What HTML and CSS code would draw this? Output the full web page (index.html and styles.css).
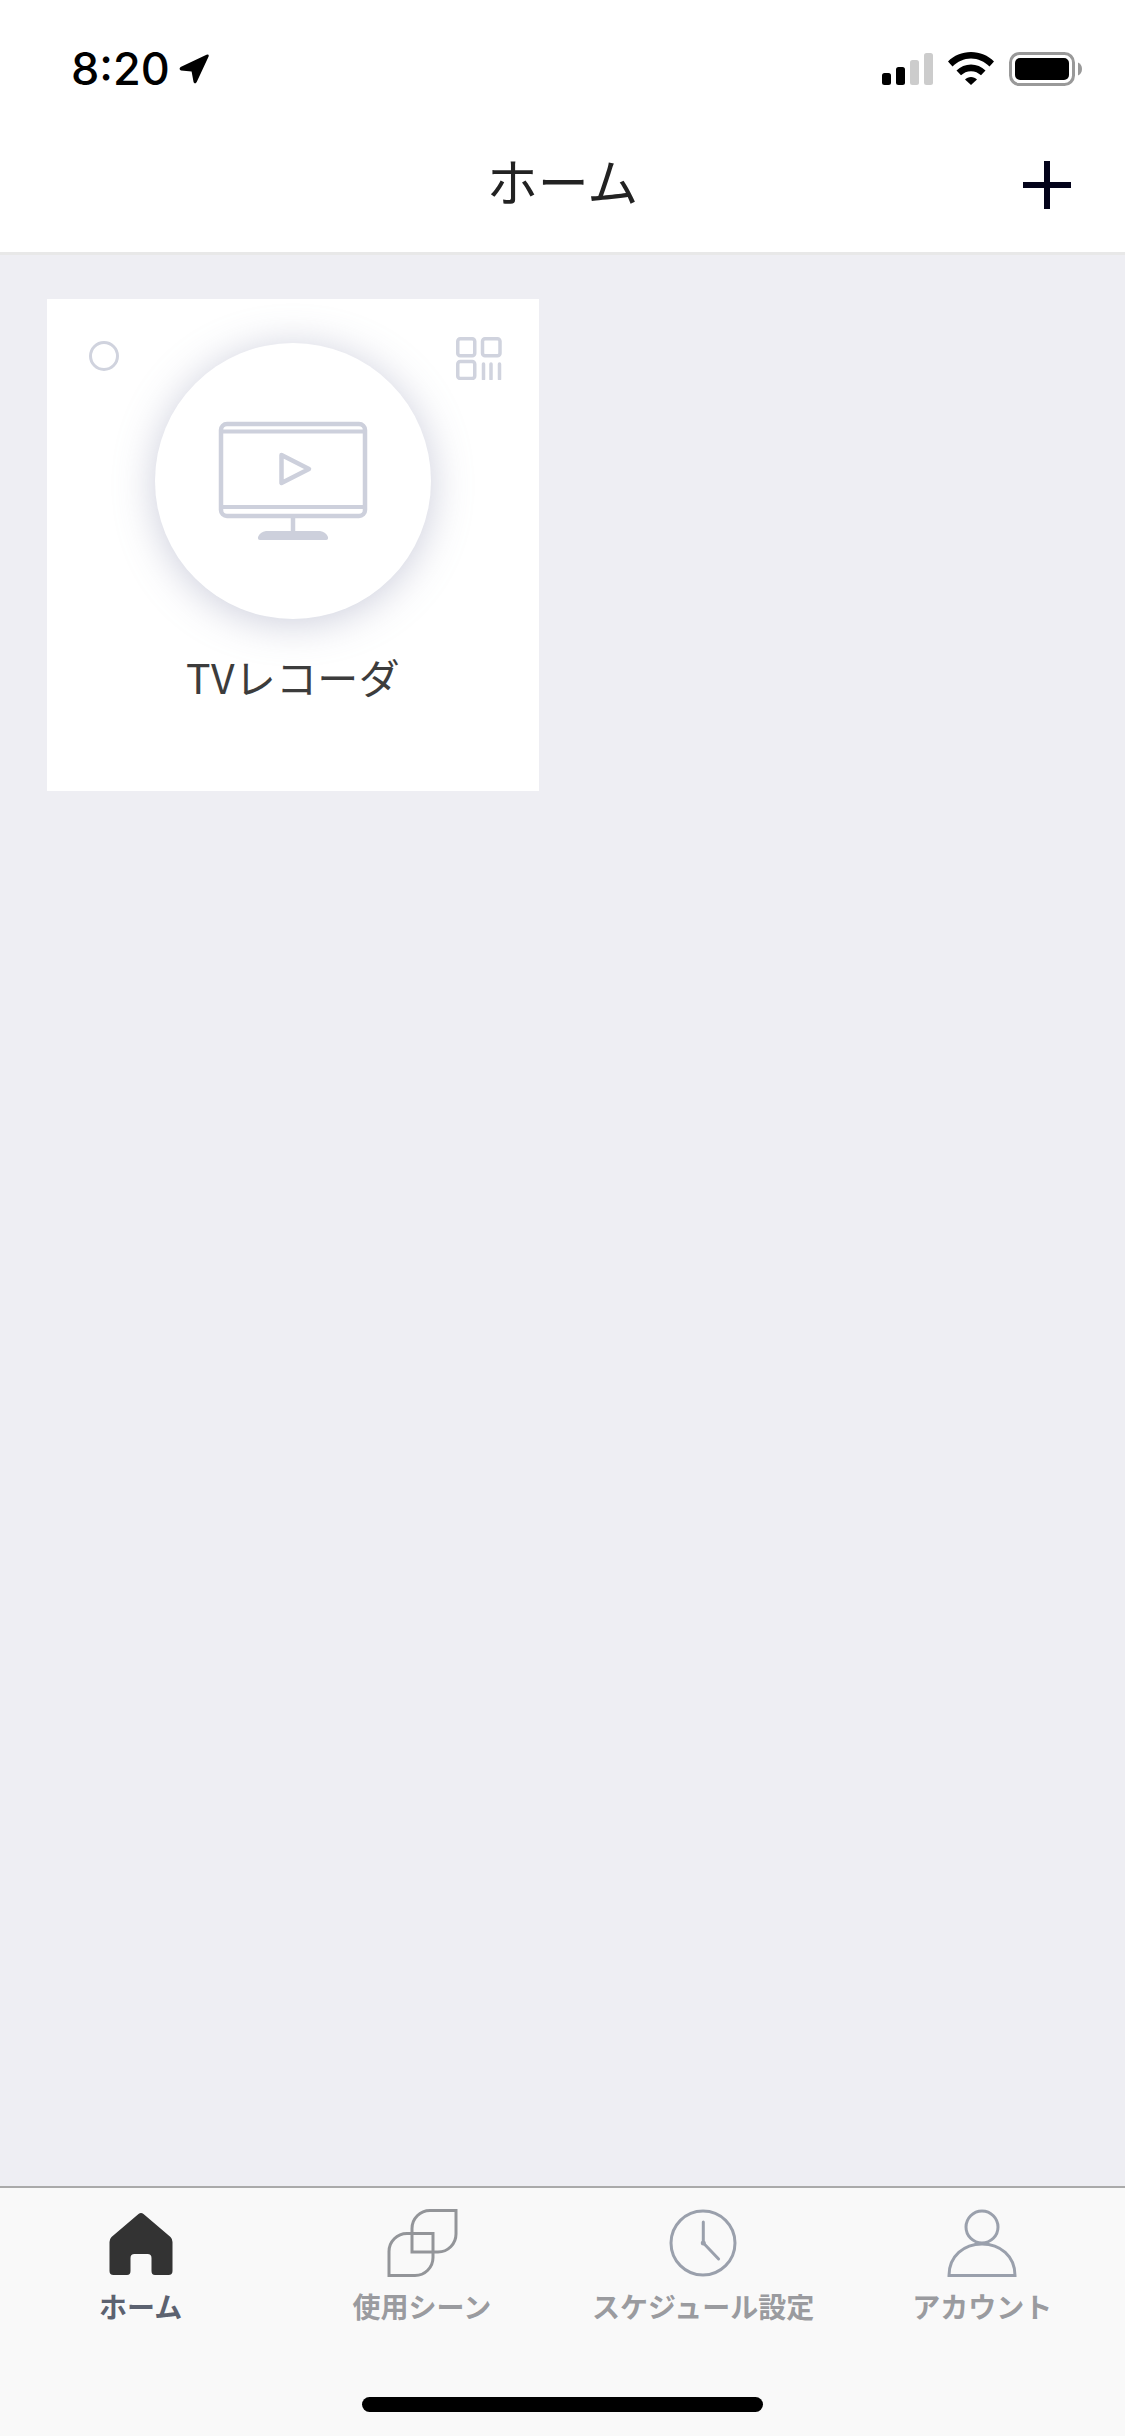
FILE: index.html
```html
<!DOCTYPE html>
<html lang="ja">
<head>
    <meta charset="UTF-8">
    <meta name="viewport" content="width=device-width, initial-scale=1.0">
    <title>ホーム</title>
    <link rel="stylesheet" href="styles.css">
</head>
<body>
<div class="app">
    <div class="status-bar">
        <div class="status-left">
            <span class="time">8:20</span>
            <svg class="location" width="30" height="30" viewBox="0 0 30 30">
                <path d="M27.5.7Q30.3-.2 29.6 2.5L17.6 28.3Q16 30.6 14.6 28.3L12.6 17.4 2 16.6Q-.6 15.2 1.6 13Z" fill="#000"/>
            </svg>
        </div>
        <div class="status-right">
            <svg class="signal" width="51" height="33" viewBox="0 0 51 33">
                <rect x="0" y="21" width="9" height="12" rx="2.5" fill="#000"/>
                <rect x="14" y="15" width="9" height="18" rx="2.5" fill="#000"/>
                <rect x="28" y="8" width="9" height="25" rx="2.5" fill="#ccc"/>
                <rect x="42" y="1" width="9" height="32" rx="2.5" fill="#ccc"/>
            </svg>
            <svg class="wifi" width="46" height="33" viewBox="0 0 46 33">
                <path d="M23 0C14 0 6 3.5 0 9.5L4.5 14.5C9.5 9.5 16 6.5 23 6.5C30 6.5 36.500 9.500 41.500 14.500L46 9.500C40 3.500 32 0 23 0Z" fill="#000"/>
                <path d="M23 12.500C17.500 12.500 12.500 14.700 8.500 18.500L13 23.300C15.700 20.800 19 19.200 23 19.200C27 19.200 30.300 20.800 33 23.300L37.500 18.500C33.500 14.700 28.500 12.500 23 12.500Z" fill="#000"/>
                <path d="M23 25C20.500 25 18.600 25.900 17 27.400L23 33L29 27.400C27.400 25.900 25.500 25 23 25Z" fill="#000"/>
            </svg>
            <svg class="battery" width="73" height="34" viewBox="0 0 73 34">
                <rect x="1.500" y="1.500" width="63" height="31" rx="9" fill="none" stroke="#999" stroke-width="3"/>
                <rect x="6" y="6" width="54" height="22" rx="5" fill="#000"/>
                <path d="M69 10.500C71.500 11.500 73 14 73 17C73 20 71.500 22.500 69 23.500Z" fill="#999"/>
            </svg>
        </div>
    </div>

    <header class="nav-bar">
        <h1 class="nav-title">ホーム</h1>
        <svg class="nav-add" width="48" height="48" viewBox="0 0 48 48">
            <path d="M24 0V48M0 24H48" stroke="#03031a" stroke-width="6" fill="none"/>
        </svg>
    </header>

    <main class="content">
        <div class="device-card">
            <span class="select-dot"></span>
            <svg class="qr-icon" width="46" height="43" viewBox="0 0 46 43">
                <g fill="none" stroke="#d0d3de" stroke-width="3.500">
                    <rect x="1.750" y="1.750" width="17" height="17" rx="2.500"/>
                    <rect x="26.500" y="1.750" width="17.500" height="17" rx="2.500"/>
                    <rect x="1.750" y="24.500" width="17" height="17" rx="2.500"/>
                    <path d="M27.500 27V42M35 27V42M43.500 27V42" stroke-linecap="round"/>
                </g>
            </svg>
            <div class="device-circle">
                <svg width="150" height="120" viewBox="0 0 150 120">
                    <g fill="none" stroke="#cdd0dc">
                        <rect x="3" y="3" width="144" height="92" rx="6" stroke-width="4.500"/>
                        <path d="M3 10.500H147M3 86H147" stroke-width="4"/>
                        <path d="M75 96V111" stroke-width="4.500"/>
                        <path d="M63.500 34L91 48L63.500 62Z" stroke-width="4.500" stroke-linejoin="round"/>
                    </g>
                    <path d="M48 110H102Q108 111 110 116Q110.500 119 108 119H42Q39.500 119 40 116Q42 111 48 110Z" fill="#cdd0dc"/>
                </svg>
            </div>
            <div class="device-name">TVレコーダ</div>
        </div>
    </main>

    <nav class="tab-bar">
        <div class="tabs">
            <div class="tab active">
                <svg width="80" height="70" viewBox="0 0 80 70">
                    <path d="M37.500 5Q40 3 42.500 5L69.500 28Q71.500 30 71.500 33V62Q71.500 66 67.500 66H54Q50.500 66 50.500 62V49Q50.500 45 46.500 45H33.500Q29.500 45 29.500 49V62Q29.500 66 26 66H12.500Q8.500 66 8.500 62V33Q8.500 30 10.500 28Z" fill="#333"/>
                </svg>
                <span>ホーム</span>
            </div>
            <div class="tab">
                <svg width="80" height="70" viewBox="0 0 80 70">
                    <g fill="none" stroke="#939599" stroke-width="3">
                        <path d="M74 1.500H48A18 18 0 0 0 30 19.500V43H56A18 18 0 0 0 74 25Z"/>
                        <path d="M51 24.500H25A18 18 0 0 0 7 42.500V66.500H33A18 18 0 0 0 51 48.500Z"/>
                    </g>
                </svg>
                <span>使用シーン</span>
            </div>
            <div class="tab">
                <svg width="80" height="70" viewBox="0 0 80 70">
                    <g fill="none" stroke="#9aa0ac" stroke-width="3">
                        <circle cx="40" cy="34" r="32"/>
                        <path d="M40.300 13V34L55.600 50" stroke-linecap="round"/>
                    </g>
                    <circle cx="40.300" cy="34" r="2.500" fill="#9aa0ac"/>
                </svg>
                <span>スケジュール設定</span>
            </div>
            <div class="tab tab-last">
                <svg width="80" height="70" viewBox="0 0 80 70">
                    <g fill="none" stroke="#9aa0ac" stroke-width="3">
                        <circle cx="40" cy="18" r="16"/>
                        <path d="M7 66.500C7 47 22 35 40 35C58 35 73 47 73 66.500Z"/>
                    </g>
                </svg>
                <span>アカウント</span>
            </div>
        </div>
        <div class="home-indicator"></div>
    </nav>
</div>
</body>
</html>
```

FILE: styles.css
```css
html, body {
    margin: 0;
    padding: 0;
}
body {
    font-family: "Noto Sans CJK JP", "Noto Sans", sans-serif;
    background-color: #eeeef3;
}
.app {
    width: 1125px;
    height: 2436px;
    display: flex;
    flex-direction: column;
    overflow: hidden;
}

/* status bar */
.status-bar {
    height: 117px;
    box-sizing: border-box;
    padding: 52px 43px 0 71px;
    background-color: #ffffff;
    display: flex;
    justify-content: space-between;
    align-items: flex-start;
}
.status-left {
    display: flex;
    align-items: center;
    gap: 9px;
}
.time {
    font-family: Inter, "Liberation Sans", sans-serif;
    font-size: 45px;
    font-weight: 550;
    line-height: 33px;
    color: #000000;
}
.location {
    display: block;
}
.status-right {
    display: flex;
    align-items: flex-start;
    gap: 15px;
}
.status-right svg {
    display: block;
}

/* header */
.nav-bar {
    height: 138px;
    box-sizing: border-box;
    padding: 0 54px 10px;
    background-color: #ffffff;
    border-bottom: 3px solid #e8e8e8;
    display: grid;
    grid-template-columns: 1fr auto 1fr;
    align-items: center;
}
.nav-title {
    grid-column: 2;
    margin: 0;
    font-size: 51px;
    font-weight: 400;
    color: #222222;
}
.nav-add {
    justify-self: end;
    margin-top: 10px;
}

/* device list */
.content {
    flex: 1;
    padding: 44px 47px;
}
.device-card {
    position: relative;
    width: 492px;
    height: 492px;
    box-sizing: border-box;
    padding-top: 44px;
    background-color: #ffffff;
    display: flex;
    flex-direction: column;
    align-items: center;
}
.select-dot {
    position: absolute;
    top: 42px;
    left: 42px;
    width: 30px;
    height: 30px;
    box-sizing: border-box;
    border: 3px solid #d0d3de;
    border-radius: 50%;
}
.qr-icon {
    position: absolute;
    top: 38px;
    left: 409px;
}
.device-circle {
    width: 276px;
    height: 276px;
    flex-shrink: 0;
    border-radius: 50%;
    background-color: #ffffff;
    box-shadow: 0 4px 40px rgba(140, 145, 175, 0.45);
    display: flex;
    justify-content: center;
    align-items: center;
}
.device-name {
    margin-top: 27px;
    font-size: 41px;
    font-weight: 400;
    letter-spacing: 0.3px;
    line-height: 60px;
    color: #3c3c3c;
}

/* tab bar */
.tab-bar {
    height: 250px;
    box-sizing: border-box;
    border-top: 2px solid #aaaaaa;
    background-color: #f9f9f9;
    display: flex;
    flex-direction: column;
    align-items: center;
}
.tabs {
    width: 100%;
    margin-top: 21px;
    display: flex;
}
.tab {
    flex: 1;
    display: flex;
    flex-direction: column;
    align-items: center;
    font-size: 28px;
    font-weight: 700;
    line-height: 40px;
    color: #9a9b9f;
}
.tab svg {
    display: block;
}
.tab span {
    margin-top: 7px;
    white-space: nowrap;
}
.tab.active {
    color: #5c6270;
}
.tab-last svg,
.tab-last span {
    margin-right: 4px;
}
.home-indicator {
    width: 401px;
    height: 15px;
    margin-top: auto;
    margin-bottom: 24px;
    border-radius: 8px;
    background-color: #000000;
}
```
